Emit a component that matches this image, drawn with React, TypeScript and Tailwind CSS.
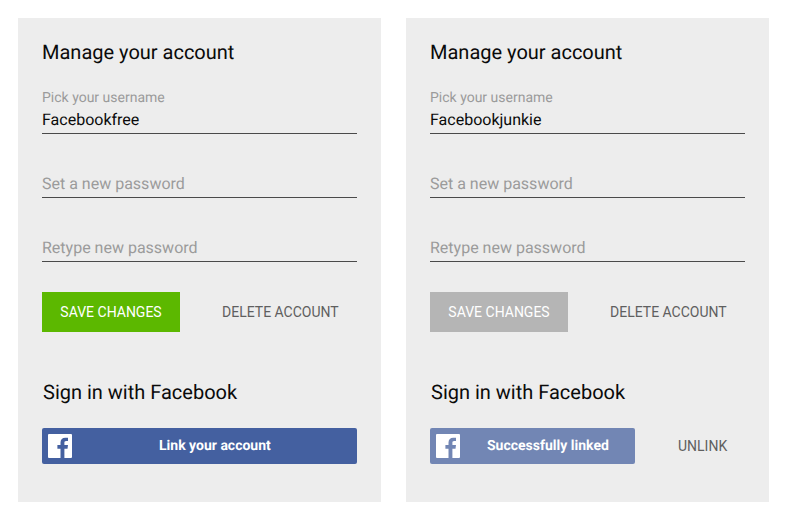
const FacebookIcon = () => (
  <svg width="24" height="24" viewBox="0 0 24 24" className="shrink-0">
    <path
      fill="#ffffff"
      d="M1 0h22a1 1 0 0 1 1 1v22a1 1 0 0 1-1 1h-6.600v-9.300h3.100l.5-3.600h-3.600V8.800c0-1 .3-1.800 1.800-1.800H20V3.800c-.3 0-1.500-.1-2.800-.1-2.800 0-4.700 1.700-4.700 4.800v2.600H9.400v3.600h3.100V24H1a1 1 0 0 1-1-1V1a1 1 0 0 1 1-1z"
    />
  </svg>
);

const Field = ({
  label,
  value,
  placeholder,
}: {
  label?: string;
  value?: string;
  placeholder?: string;
}) => (
  <div className="flex flex-col justify-end h-[64px] border-b border-[#4a4a4a]">
    {label && <div className="text-[14px] leading-[20px] text-[#9b9b9b]">{label}</div>}
    {value && <div className="text-[16px] leading-[24px] pb-[1px] text-[#0a0a0a]">{value}</div>}
    {placeholder && <div className="text-[16px] leading-[24px] pb-[1px] text-[#9b9b9b]">{placeholder}</div>}
  </div>
);

const AccountCard = ({ username, linked }: { username: string; linked?: boolean }) => (
  <div className="w-[363px] h-[484px] bg-[#ededed] px-6 pt-[21px]">
    <h2 className="text-[20px] leading-[26px] text-[#0a0a0a]">Manage your account</h2>
    <div className="mt-[5px] flex flex-col">
      <Field label="Pick your username" value={username} />
      <Field placeholder="Set a new password" />
      <Field placeholder="Retype new password" />
    </div>
    <div className="flex items-center mt-[30px]">
      <button
        className={`w-[138px] h-[40px] text-[14px] text-white ${
          linked ? "bg-[#b5b5b5]" : "bg-[#5cb800]"
        }`}
      >
        SAVE CHANGES
      </button>
      <button className="ml-[42px] text-[14px] text-[#5f5f5f]">DELETE ACCOUNT</button>
    </div>
    <h2 className="mt-[47px] ml-[1px] text-[20px] leading-[26px] text-[#0a0a0a]">Sign in with Facebook</h2>
    <div className="flex items-center mt-[23px]">
      {linked ? (
        <>
          <div className="flex items-center w-[205px] h-[36px] rounded-[2px] bg-[#7286b4] pl-[6px]">
            <FacebookIcon />
            <span className="ml-[27px] text-[14px] font-bold text-white">Successfully linked</span>
          </div>
          <button className="ml-[43px] text-[14px] text-[#5f5f5f]">UNLINK</button>
        </>
      ) : (
        <div className="flex items-center w-full h-[36px] rounded-[2px] bg-[#4460a0] pl-[6px]">
          <FacebookIcon />
          <span className="ml-[87px] text-[14px] font-bold text-white">Link your account</span>
        </div>
      )}
    </div>
  </div>
);

export default function App() {
  return (
    <div className="w-[787px] h-[520px] bg-white flex gap-[25px] pt-[18px] pl-[18px] font-['Roboto',sans-serif] [text-rendering:geometricPrecision]">
      <AccountCard username="Facebookfree" />
      <AccountCard username="Facebookjunkie" linked />
    </div>
  );
}
